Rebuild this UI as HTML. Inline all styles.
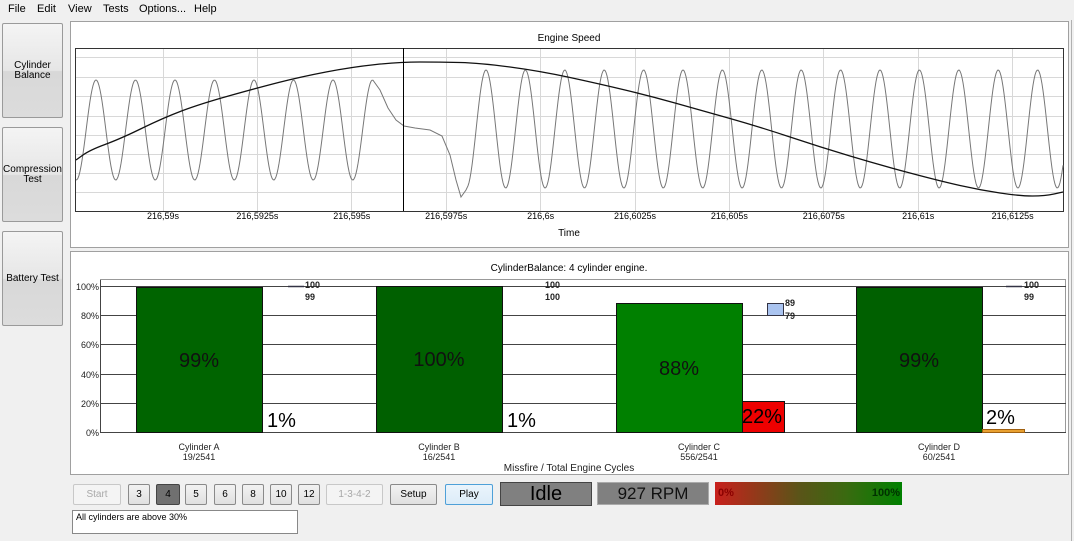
<!DOCTYPE html>
<html><head><meta charset="utf-8">
<style>
*{margin:0;padding:0;box-sizing:border-box}
body{width:1074px;height:541px;background:#f0f0f0;font-family:"Liberation Sans",sans-serif;font-size:11px;color:#000;position:relative;overflow:hidden}
.abs{position:absolute}
.menu span{position:absolute;top:3px;font-size:11px}
.lbtn{position:absolute;left:2px;width:61px;height:95px;border:1px solid #9a9a9a;border-radius:2px;background:linear-gradient(#f4f4f4,#e6e6e6 50%,#d8d8d8 51%,#dcdcdc);font-size:10px;text-align:center;display:flex;align-items:center;justify-content:center;line-height:10px}
.panel{position:absolute;background:#fff;border:1px solid #a0a0a0}
.btn{position:absolute;top:484px;height:21px;border:1px solid #8a8a8a;border-radius:2px;background:linear-gradient(#f2f2f2,#e0e0e0);font-size:10px;text-align:center;line-height:19px}
.dis{color:#a8a8a8;border-color:#c8c8c8;background:#f4f4f4}
</style></head><body>
<div class="menu">
<span style="left:8px">File</span><span style="left:37px">Edit</span><span style="left:68px">View</span><span style="left:103px">Tests</span><span style="left:139px">Options...</span><span style="left:194px">Help</span>
</div>
<div class="lbtn" style="top:23px">Cylinder<br>Balance</div>
<div class="lbtn" style="top:127px">Compression<br>Test</div>
<div class="lbtn" style="top:231px">Battery Test</div>

<div class="panel" style="left:70px;top:21px;width:999px;height:227px"></div>
<div class="panel" style="left:70px;top:251px;width:999px;height:224px"></div>
<div class="abs" style="left:1071px;top:20px;width:1px;height:521px;background:#b0b0b0"></div>

<svg class="abs" style="left:0;top:0" width="1074" height="541" font-family="Liberation Sans, sans-serif">
<text x="569" y="41" font-size="10" text-anchor="middle">Engine Speed</text>
<g id="grid" stroke="#d8d8d8" stroke-width="1"></g>
<rect x="75.5" y="48.5" width="988" height="163" fill="none" stroke="#333"/>
<path id="wave" fill="none" stroke="#777" stroke-width="1"/>
<path id="curve" fill="none" stroke="#111" stroke-width="1.3"/>
<line x1="403.5" y1="48" x2="403.5" y2="211" stroke="#000"/>
<g font-size="9" text-anchor="middle" id="ticks"></g>
<text x="569" y="236" font-size="10" text-anchor="middle">Time</text>

<text x="569" y="271" font-size="10" text-anchor="middle">CylinderBalance: 4 cylinder engine.</text>
<rect x="100.5" y="279.5" width="965" height="153" fill="#fff" stroke="#999"/>
<g stroke="#444" stroke-width="1">
<line x1="100" y1="286.5" x2="1066" y2="286.5"/><line x1="100" y1="315.5" x2="1066" y2="315.5"/><line x1="100" y1="344.5" x2="1066" y2="344.5"/><line x1="100" y1="374.5" x2="1066" y2="374.5"/><line x1="100" y1="403.5" x2="1066" y2="403.5"/><line x1="100" y1="432.5" x2="1066" y2="432.5"/>
<line x1="100.5" y1="280" x2="100.5" y2="433"/>
</g>
<g font-size="9" text-anchor="end" fill="#222">
<text x="99" y="290">100%</text><text x="99" y="319">80%</text><text x="99" y="348">60%</text><text x="99" y="378">40%</text><text x="99" y="407">20%</text><text x="99" y="436">0%</text>
</g>
<g stroke="#111">
<rect x="136.5" y="287.5" width="126" height="145" fill="#006400"/>
<rect x="376.5" y="286.5" width="126" height="146" fill="#006000"/>
<rect x="616.5" y="303.5" width="126" height="129" fill="#008000"/>
<rect x="856.5" y="287.5" width="126" height="145" fill="#006000"/>
<rect x="742.5" y="401.5" width="42" height="31" fill="#ee0000"/>
<rect x="982.5" y="429.5" width="42" height="3" fill="#e8a030" stroke="#a06010"/>
<rect x="767.5" y="303.5" width="16" height="12" fill="#aac4f0" stroke="#334"/>
</g>
<g stroke="#334" stroke-width="1.5"><line x1="288" y1="286.5" x2="304" y2="286.5"/><line x1="1006" y1="286.5" x2="1022" y2="286.5"/></g>
<g font-size="20" text-anchor="middle" fill="#111">
<text x="199" y="367">99%</text><text x="439" y="366">100%</text><text x="679" y="375">88%</text><text x="919" y="367">99%</text>
</g>
<g font-size="20" fill="#000"><text x="267" y="427">1%</text><text x="507" y="427">1%</text><text x="742" y="423">22%</text><text x="986" y="424">2%</text></g>
<g font-size="9" font-weight="bold" fill="#222">
<text x="305" y="288">100</text><text x="305" y="300">99</text>
<text x="545" y="288">100</text><text x="545" y="300">100</text>
<text x="785" y="306">89</text><text x="785" y="319">79</text>
<text x="1024" y="288">100</text><text x="1024" y="300">99</text>
</g>
<g font-size="9" text-anchor="middle" fill="#222">
<text x="199" y="450">Cylinder A</text><text x="199" y="460">19/2541</text>
<text x="439" y="450">Cylinder B</text><text x="439" y="460">16/2541</text>
<text x="699" y="450">Cylinder C</text><text x="699" y="460">556/2541</text>
<text x="939" y="450">Cylinder D</text><text x="939" y="460">60/2541</text>
<text x="569" y="471" font-size="10">Missfire / Total Engine Cycles</text>
</g>
</svg>

<div class="btn dis" style="left:73px;width:48px">Start</div>
<div class="btn" style="left:128px;width:22px">3</div>
<div class="btn" style="left:156px;width:24px;background:#707070;border-color:#444">4</div>
<div class="btn" style="left:185px;width:22px">5</div>
<div class="btn" style="left:214px;width:22px">6</div>
<div class="btn" style="left:242px;width:22px">8</div>
<div class="btn" style="left:270px;width:22px">10</div>
<div class="btn" style="left:298px;width:22px">12</div>
<div class="btn dis" style="left:326px;width:57px">1-3-4-2</div>
<div class="btn" style="left:390px;width:47px">Setup</div>
<div class="btn" style="left:445px;width:48px;border-color:#4ea0d8;background:linear-gradient(#eaf4fc,#dcecf8)">Play</div>
<div class="abs" style="left:500px;top:482px;width:92px;height:24px;background:#808080;border:1px solid #444;font-size:20px;text-align:center;line-height:22px">Idle</div>
<div class="abs" style="left:597px;top:482px;width:112px;height:23px;background:#808080;border:1px solid #aaa;font-size:17px;text-align:center;line-height:22px;color:#111">927 RPM</div>
<div class="abs" style="left:715px;top:482px;width:187px;height:23px;background:linear-gradient(90deg,#c8201c,#5a5418 45%,#3a6a10 70%,#008000);font-size:11px;font-weight:bold;line-height:23px">
<span style="position:absolute;left:3px;color:#8a0000">0%</span><span style="position:absolute;right:2px;color:#003000">100%</span></div>
<div class="abs" style="left:72px;top:510px;width:226px;height:24px;background:#fff;border:1px solid #888;font-size:9px;padding:1px 3px">All cylinders are above 30%</div>

<script>
var g=document.getElementById('grid'),s='';
[57,77,96,116,135,154,173,192].forEach(function(y){s+='<line x1="76" y1="'+(y+.5)+'" x2="1063" y2="'+(y+.5)+'"/>';});
var ticks=['216,59s','216,5925s','216,595s','216,5975s','216,6s','216,6025s','216,605s','216,6075s','216,61s','216,6125s'],t='';
ticks.forEach(function(l,i){var x=163+i*94.4;s+='<line x1="'+(x|0)+'.5" y1="49" x2="'+(x|0)+'.5" y2="211"/>';t+='<text x="'+x+'" y="219">'+l+'</text>';});
g.innerHTML=s;document.getElementById('ticks').innerHTML=t;
var p=[];
for(var x=76;x<=373;x+=1){p.push([x,130-50*Math.cos(2*Math.PI*(x-96)/39.5)]);}
var seg=[[380,90],[388,108],[396,120],[404,126],[415,128],[430,130],[442,136],[450,155],[456,180],[461,197],[466,190]];
seg.forEach(function(q){p.push(q)});
for(var x=468;x<=1063;x+=1){p.push([x,129-59*Math.cos(2*Math.PI*(x-486)/39.4)]);}
document.getElementById('wave').setAttribute('d','M'+p.map(function(q){return q[0]+','+q[1].toFixed(1)}).join('L'));
var c=[[76,160],[90,150],[120,139],[163,118],[200,104],[257,88],[300,77],[352,67],[400,62],[440,62],[480,63],[540,71],[600,84],[650,96],[700,110],[760,127],[820,147],[880,165],[940,181],[980,190],[1020,196],[1045,196],[1063,192]];
var d='M'+c[0].join(',');
for(var i=1;i<c.length;i++){var a=c[i-1],b=c[i];d+=' Q'+a[0]+','+a[1]+' '+((a[0]+b[0])/2)+','+((a[1]+b[1])/2);}
d+=' L'+c[c.length-1].join(',');
document.getElementById('curve').setAttribute('d',d);
</script>
</body></html>
